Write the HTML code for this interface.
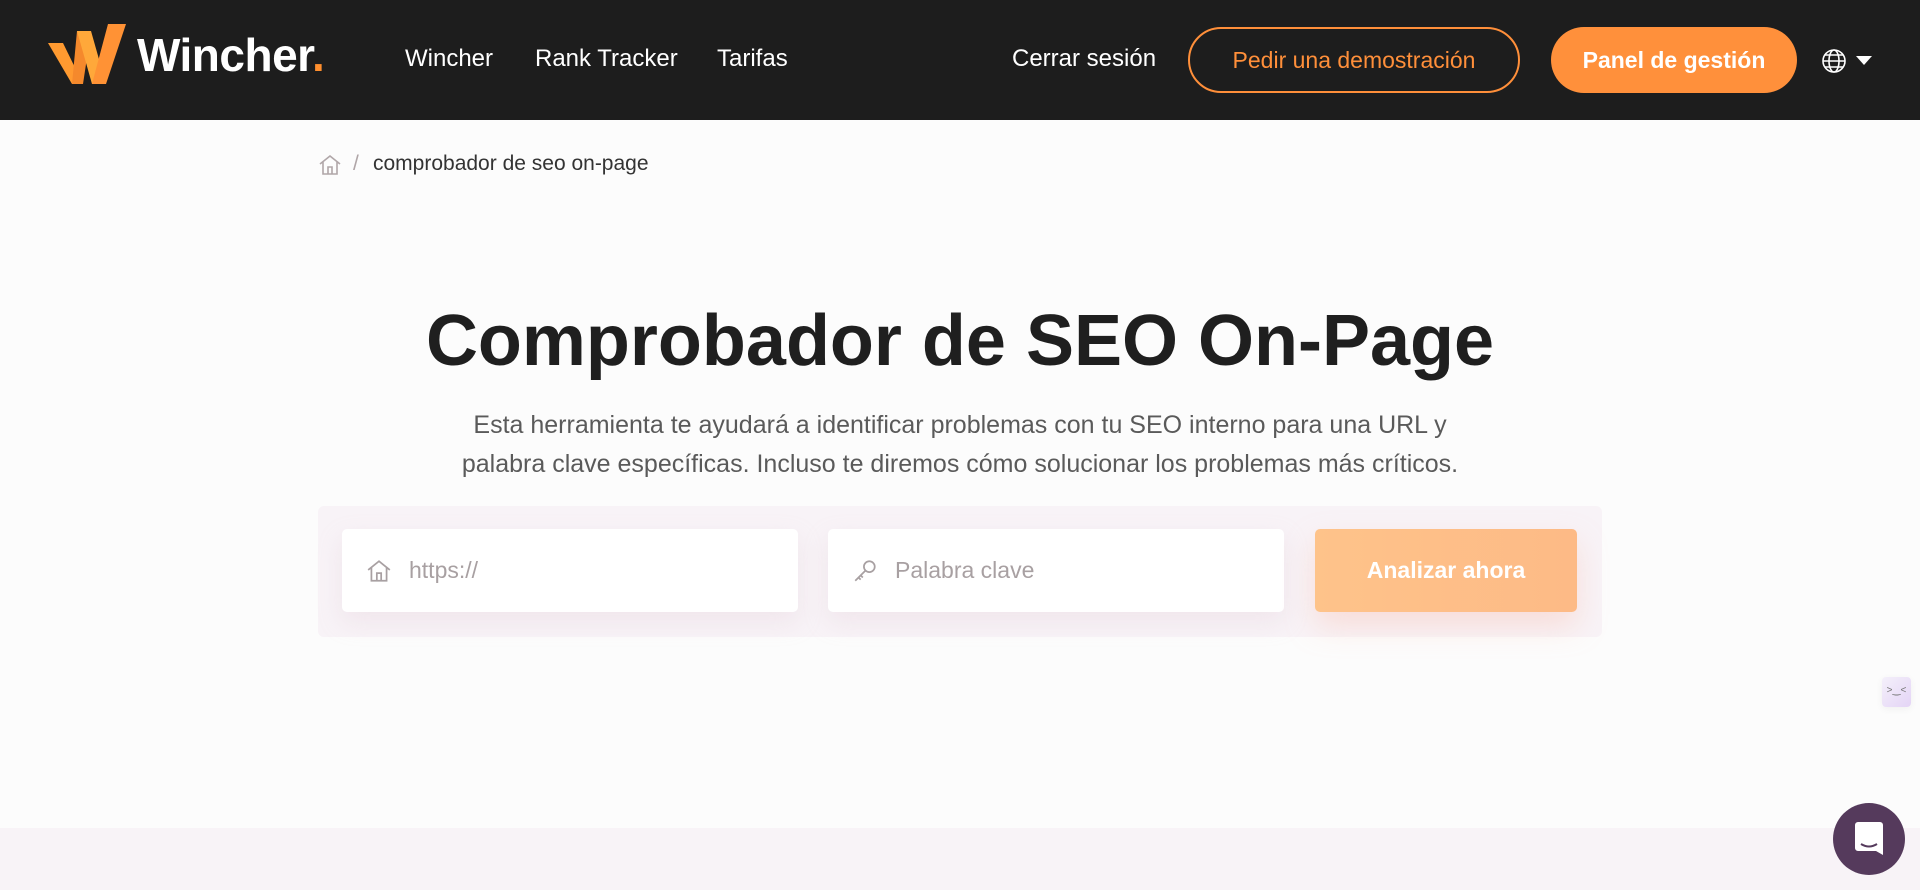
<!DOCTYPE html>
<html><head><meta charset="utf-8"><style>
*{margin:0;padding:0;box-sizing:border-box}
body{width:1920px;height:890px;overflow:hidden;background:#fcfcfc;font-family:"Liberation Sans",sans-serif;position:relative}
.hdr{position:absolute;left:0;top:0;width:1920px;height:120px;background:#1d1d1d}
.a{position:absolute;white-space:nowrap}
.nav{color:#fff;font-size:24px;top:45px}
.btn{position:absolute;top:27px;height:66px;border-radius:33px;font-size:23px;display:flex;align-items:center;justify-content:center}
.box{position:absolute;left:318px;top:506px;width:1284px;height:131px;background:#f8f3f7;border-radius:6px}
.inp{position:absolute;top:529px;height:83px;background:#fff;border-radius:5px;box-shadow:0 10px 24px rgba(220,190,205,.25);display:flex;align-items:center;font-size:23px;color:#a8a0a2}
</style></head><body>
<div class="hdr"></div>
<svg class="a" style="left:46px;top:22px" width="82" height="64" viewBox="46 22 82 64">
<polygon points="48,43 63,43 83,84 72,84" fill="#ff9a30"/>
<polygon points="77,31 91,31 83,84 72,84" fill="#f5892c"/>
<polygon points="77,31 91,31 106,84 92,84" fill="#ffa83a"/>
<polygon points="108,24 126,24 106,84 92,84" fill="#ff9235"/>
</svg>
<div class="a" style="left:137px;top:28px;color:#fff;font-size:46px;font-weight:bold;letter-spacing:-0.5px">Wincher<span style="color:#ff8f2e">.</span></div>
<div class="a nav" style="left:405px">Wincher</div>
<div class="a nav" style="left:535px">Rank Tracker</div>
<div class="a nav" style="left:717px">Tarifas</div>
<div class="a nav" style="left:1012px">Cerrar sesión</div>
<div class="btn" style="left:1188px;width:332px;border:2px solid #ff8f3a;color:#ff8f3a">Pedir una demostración</div>
<div class="btn" style="left:1551px;width:246px;background:#ff903b;color:#fff;font-weight:bold">Panel de gestión</div>
<svg class="a" style="left:1821px;top:48px" width="26" height="26" viewBox="0 0 26 26" fill="none" stroke="#fff" stroke-width="1.6"><circle cx="13" cy="13" r="11"/><ellipse cx="13" cy="13" rx="5" ry="11"/><path d="M2 13h22M4 7h18M4 19h18"/></svg>
<svg class="a" style="left:1856px;top:56px" width="16" height="10"><polygon points="0,0 16,0 8,9" fill="#fff"/></svg>

<svg class="a" style="left:318px;top:154px" width="24" height="22" viewBox="0 0 24 22" fill="none" stroke="#b0a6a8" stroke-width="1.6"><path d="M2 10L12 2l10 8M5 8v12h14V8M10 20v-7h4v7"/></svg>
<div class="a" style="left:353px;top:152px;font-size:21px;color:#b0a6a8">/</div>
<div class="a" style="left:373px;top:152px;font-size:21px;color:#333">comprobador de seo on-page</div>

<div class="a" style="left:0;width:1920px;text-align:center;top:300px;font-size:72px;font-weight:bold;color:#1f1f1f">Comprobador de SEO On-Page</div>
<div class="a" style="left:0;width:1920px;text-align:center;top:406px;font-size:25px;line-height:39px;color:#5a5a5a">Esta herramienta te ayudará a identificar problemas con tu SEO interno para una URL y<br>palabra clave específicas. Incluso te diremos cómo solucionar los problemas más críticos.</div>

<div class="box"></div>
<div class="inp" style="left:342px;width:456px">
<svg style="margin-left:24px;margin-right:17px" width="26" height="26" viewBox="0 0 24 24" fill="none" stroke="#a8a0a2" stroke-width="1.6"><path d="M2 11L12 3l10 8M5 9v12h14V9M10 21v-7h4v7"/></svg>https://</div>
<div class="inp" style="left:828px;width:456px">
<svg style="margin-left:24px;margin-right:17px" width="26" height="26" viewBox="0 0 24 24" fill="none" stroke="#a8a0a2" stroke-width="1.6"><circle cx="16" cy="8" r="5"/><path d="M12.5 11.5L3 21M6 18l2 2M8 16l2 2"/></svg>Palabra clave</div>
<div class="inp" style="left:1315px;width:262px;background:linear-gradient(90deg,#fec38a,#fdba86);color:#fff;justify-content:center;font-weight:bold;box-shadow:0 14px 30px rgba(250,180,160,.35)">Analizar ahora</div>

<div class="a" style="left:1882px;top:677px;width:29px;height:30px;background:linear-gradient(135deg,#f4f0fa,#e4d4f6);border-radius:4px;box-shadow:0 2px 8px rgba(0,0,0,.05);font-size:10px;color:#777;text-align:center;line-height:28px">&gt;‿&lt;</div>
<div class="a" style="left:0;top:828px;width:1920px;height:62px;background:#f8f3f7"></div>
<div class="a" style="left:1833px;top:803px;width:72px;height:72px;border-radius:50%;background:#553a5c"></div>
<svg class="a" style="left:1853px;top:821px" width="32" height="36" viewBox="0 0 32 36"><path d="M2 4a3 3 0 0 1 3-3h22a3 3 0 0 1 3 3v30l-7-4H5a3 3 0 0 1-3-3z" fill="#fff"/><path d="M8 23q8 5 16 0" stroke="#553a5c" stroke-width="2" fill="none"/></svg>
</body></html>
